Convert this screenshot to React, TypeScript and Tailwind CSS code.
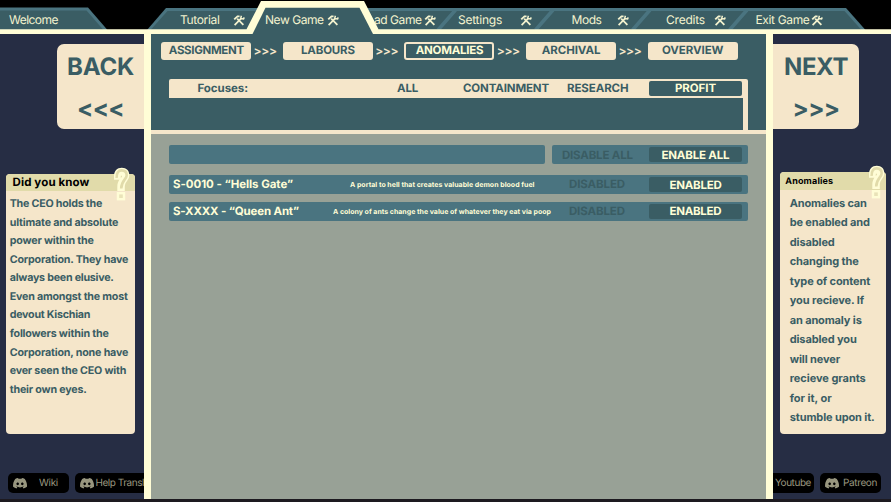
import React from "react";

const STEPS = ["ASSIGNMENT", "LABOURS", "ANOMALIES", "ARCHIVAL", "OVERVIEW"];

const FACTS: [string, number][] = [
  ["The CEO holds the", 92.5],
  ["ultimate and absolute", 108.5],
  ["power within the", 84],
  ["Corporation. They have", 118.5],
  ["always been elusive.", 104],
  ["Even amongst the most", 118],
  ["devout Kischian", 80.5],
  ["followers within the", 99],
  ["Corporation, none have", 118.5],
  ["ever seen the CEO with", 116.5],
  ["their own eyes.", 77],
];

const HELP: [string, number][] = [
  ["Anomalies can", 77],
  ["be enabled and", 80],
  ["disabled", 45],
  ["changing the", 69],
  ["type of content", 80.5],
  ["you recieve. If", 74.5],
  ["an anomaly is", 72],
  ["disabled you", 67],
  ["will never", 50.5],
  ["recieve grants", 76],
  ["for it, or", 42],
  ["stumble upon it.", 85],
];

/** Text tracked so that it fills exactly `w` pixels. */
function T({ w, children }: { w: number; children: string }) {
  const ref = React.useRef<HTMLSpanElement>(null);
  const [spacing, setSpacing] = React.useState(0);
  React.useLayoutEffect(() => {
    if (ref.current) {
      const natural = ref.current.getBoundingClientRect().width;
      setSpacing((w - natural) / children.length);
    }
  }, []);
  return (
    <span ref={ref} className="inline-block whitespace-pre" style={{ letterSpacing: spacing }}>
      {children}
    </span>
  );
}

function Tools() {
  return (
    <svg viewBox="0 0 12 12" className="h-[11px] w-[12px] shrink-0" fill="none" stroke="#f4f3cf">
      <path d="M4 4 10.800 10.800" strokeWidth="1.900" />
      <path d="M.8 4.800 4.400 1.500 6.600 1.500" strokeWidth="2.100" />
      <path d="M1.200 11 8.400 3.800" strokeWidth="1.900" />
      <path d="M8.600 .8 7.800 3.900 11 4.400 11.700 2.600" strokeWidth="1.600" />
    </svg>
  );
}

function Discord() {
  return (
    <svg viewBox="0 0 24 19" className="h-[11px] w-[14px] shrink-0" fill="#98967f">
      <path
        fillRule="evenodd"
        d="M20.3 1.6A19.8 19.8 0 0 0 15.4 0l-.7 1.3a18.300 18.300 0 0 0-5.400 0L8.600 0a19.700 19.700 0 0 0-4.900 1.600C.5 6.200-.3 10.700.1 15.200a19.900 19.900 0 0 0 6 3l1.300-2.100-1.900-.9.500-.4a14.200 14.200 0 0 0 12.100 0l.5.4-1.900.9 1.300 2.100a19.800 19.800 0 0 0 6-3c.5-5.200-.8-9.700-3.700-13.600zM8 12.500c-1.200 0-2.200-1.100-2.200-2.400S6.800 7.700 8 7.700s2.200 1.100 2.200 2.400-1 2.400-2.200 2.400zm8 0c-1.200 0-2.200-1.100-2.200-2.400s1-2.400 2.200-2.400 2.200 1.100 2.200 2.400-1 2.400-2.200 2.400z"
      />
    </svg>
  );
}

function Question({ className }: { className: string }) {
  return (
    <svg viewBox="0 0 18 35" className={`absolute -top-[8px] h-[35px] w-[18px] ${className}`} fill="none">
      <path d="M2 13.800V10C2 5 5 1.700 9.800 1.700c4.700 0 7.500 3 7.500 7.300 0 5.600-4.500 6.500-4.500 12V25H5.300v-4C5.300 13.500 10 12.500 10 9.800H8.800v4Z" fill="#fffdd6" />
      <path d="M4.700 11.800C4.400 6.800 6.300 4.400 9.700 4.400c3.200 0 5 1.900 5 4.800 0 4.300-5.500 5.300-5.500 13.400" stroke="#e1dbaa" strokeWidth="2.600" />
      <path d="M4.800 26h8.400v8.400H4.800Z" fill="#fffdd6" />
      <path d="M7.200 28.400h3.600v3.600H7.200Z" fill="#e9e3b8" />
    </svg>
  );
}

function TabLabel({ w, children, className }: { w: number; children: string; className: string }) {
  return (
    <div className={`flex h-full shrink-0 items-center justify-between ${className}`}>
      <T w={w}>{children}</T>
      <Tools />
    </div>
  );
}

function TabBar() {
  return (
    <header className="relative h-[34px] shrink-0 bg-black">
      <svg viewBox="0 0 891 34" className="absolute inset-0 h-[34px] w-[891px]">
        <path d="M0 7.500H88L107.500 30H0Z" fill="#4a7480" />
        <path d="M0 10.500H86.500L103.500 30H0Z" fill="#3a5d64" />
        <path d="M147 30 166 8H846L865.500 30Z" fill="#4a7480" />
        <path d="M150.500 30 167.500 11H844.500L861.500 30Z" fill="#3a5d64" />
        <path d="M438 30 455.500 10M535.500 30 553 10M632.500 30 650 10M729.500 30 747 10" stroke="#4a7480" strokeWidth="3.500" />
        <path d="M0 29.300H246.500L261 1H364L378.500 29.300H891V34.500H0Z" fill="#fffdd6" />
        <path d="M252 35 265.500 7.700H359.500L373.500 35Z" fill="#3a5d64" />
      </svg>
      <nav className="relative flex h-full items-center pt-[6px] text-[12px] text-[#f4f3cf]">
        <div className="w-[180px] pl-[9px]"><T w={49}>Welcome</T></div>
        <TabLabel w={39.5} className="w-[65px]">Tutorial</TabLabel>
        <TabLabel w={58.5} className="ml-[20px] w-[74px]">New Game</TabLabel>
        <TabLabel w={47.5} className="ml-[35px] w-[62px]">ad Game</TabLabel>
        <TabLabel w={44} className="ml-[22px] w-[74px]">Settings</TabLabel>
        <TabLabel w={30} className="ml-[39.500px] w-[57px]">Mods</TabLabel>
        <TabLabel w={39} className="ml-[37.500px] w-[60px]">Credits</TabLabel>
        <TabLabel w={54} className="ml-[29.500px] w-[67.500px]">Exit Game</TabLabel>
      </nav>
    </header>
  );
}

function LinkButton({ label, w, className }: { label: string; w: number; className: string }) {
  return (
    <div className={`flex h-[20px] shrink-0 items-center bg-black text-[10px] text-[#98967f] ${className}`}>
      <Discord />
      <T w={w}>{label}</T>
    </div>
  );
}

function Row({ name, nameW, text, textW, pad }: { name: string; nameW: number; text: string; textW: number; pad: string }) {
  return (
    <div className="flex h-[19px] items-center rounded-[2px] bg-[#4a7480] font-bold text-[#fffdd6]">
      <div className={`shrink-0 pl-[4px] text-[11.500px] leading-none ${pad}`}><T w={nameW}>{name}</T></div>
      <div className="w-[219px] shrink-0 text-[7px] leading-none"><T w={textW}>{text}</T></div>
      <div className="flex flex-1 items-center justify-end pr-[6.500px] text-[11.500px]">
        <div className="mr-[24px] leading-none text-[#3a5d64]"><T w={56}>DISABLED</T></div>
        <div className="flex h-[15px] w-[93px] items-center justify-center rounded-[2px] bg-[#3a5d64] pt-px leading-none"><T w={52}>ENABLED</T></div>
      </div>
    </div>
  );
}

export default function App() {
  return (
    <div className="flex h-[502px] w-[891px] flex-col overflow-hidden bg-[#262d44] font-['Inter',sans-serif] [text-rendering:geometricPrecision]">
      <TabBar />
      <div className="flex h-[465px] shrink-0">
        <aside className="flex w-[144px] shrink-0 flex-col">
          <div className="mt-[9.500px] ml-[57px] flex h-[85px] w-[87px] flex-col items-center rounded-l-[7px] bg-[#f5e6ca] text-[24px] font-bold text-[#3a5d64]">
            <div className="mt-[11px] h-[41px] leading-[24px]"><T w={67}>BACK</T></div>
            <div className="leading-[26px]"><T w={47}>{"<<<"}</T></div>
          </div>
          <div className="relative mt-[45px] ml-[6px] h-[260.500px] w-[128.500px] rounded-[4px] bg-[#f5e6ca]">
            <div className="flex h-[17.500px] items-center rounded-t-[4px] bg-[#e1dbaa] pl-[6.500px] text-[11.500px] font-bold text-black"><T w={77}>Did you know</T></div>
            <Question className="right-[4.500px]" />
            <div className="pt-[4px] pl-[3.700px] text-[10.700px] leading-[18.570px] font-bold text-[#3a5d64]">
              {FACTS.map(([line, w]) => <div key={line}><T w={w}>{line}</T></div>)}
            </div>
          </div>
          <div className="mt-auto mb-[6px] ml-[8px] flex">
            <LinkButton label="Wiki" w={19} className="w-[61px] justify-between rounded-[5px] pr-[11px] pl-[5px]" />
            <LinkButton label="Help Transl" w={48.5} className="ml-[6px] w-[69px] gap-[1.500px] rounded-l-[5px] pl-[5px]" />
          </div>
        </aside>

        <main className="flex w-[629px] shrink-0 flex-col border-x-[7px] border-[#fffdd6] bg-[#98a196]">
          <section className="flex h-[100px] shrink-0 flex-col border-b-4 border-[#f5e6ca] bg-[#3a5d64]">
            <div className="flex pt-[8px] pl-[10.300px]">
              {STEPS.map((step, i) => (
                <React.Fragment key={step}>
                  <div
                    className={
                      step === "ANOMALIES"
                        ? "flex h-[18px] w-[90px] shrink-0 items-center justify-center rounded-[3px] border-2 border-[#f5e6ca] text-[11.500px] leading-none font-bold text-[#fffdd6]"
                        : "flex h-[18px] w-[90px] shrink-0 items-center justify-center rounded-[3px] bg-[#f5e6ca] text-[11.500px] leading-none font-bold text-[#3a5d64]"
                    }
                  >
                    <T w={[75, 54, 67.5, 58.5, 61.5][i]}>{step}</T>
                  </div>
                  {i < 4 && <div className="flex h-[18px] w-[31.600px] shrink-0 items-center pl-[2.300px] text-[12px] leading-[18px] font-semibold text-[#f5e6ca]"><T w={23}>{">>>"}</T></div>}
                </React.Fragment>
              ))}
            </div>
            <div className="mt-[19px] ml-[18px] flex h-[51px] w-[579.400px] shrink-0 flex-col rounded-tr-[2px] border-r-[5px] border-[#f5e6ca]">
              <div className="-mr-[2px] flex h-[19px] shrink-0 items-center rounded-tl-[2px] bg-[#f5e6ca] text-[11.500px] leading-none font-bold text-[#3a5d64]">
                <div className="w-[228px] shrink-0 pl-[28.500px]"><T w={50.5}>Focuses:</T></div>
                <div className="w-[66px] shrink-0"><T w={21}>ALL</T></div>
                <div className="w-[104px] shrink-0"><T w={86}>CONTAINMENT</T></div>
                <div className="w-[82px] shrink-0"><T w={61.5}>RESEARCH</T></div>
                <div className="flex h-[15px] w-[93px] shrink-0 items-center justify-center rounded-[2px] bg-[#3a5d64] text-[#fffdd6]"><T w={41}>PROFIT</T></div>
              </div>
            </div>
          </section>
          <section className="mt-[11.400px] ml-[18px] flex w-[579.400px] flex-col">
            <div className="flex h-[19px] justify-between">
              <div className="w-[376px] rounded-[2px] bg-[#4a7480]" />
              <div className="flex w-[196px] items-center justify-between rounded-[2px] bg-[#4a7480] pr-[6.500px] pl-[9.500px] text-[11.500px] leading-none font-bold">
                <div className="pt-px text-[#3a5d64]"><T w={71}>DISABLE ALL</T></div>
                <div className="flex h-[15px] w-[93px] items-center justify-center rounded-[2px] bg-[#3a5d64] pt-px text-[#fffdd6]"><T w={68}>ENABLE ALL</T></div>
              </div>
            </div>
            <div className="mt-[11px] flex flex-col gap-[7.700px]">
              <Row name={"S-0010 - “Hells Gate”"} nameW={120} text="A portal to hell that creates valuable demon blood fuel" textW={184.5} pad="w-[181px]" />
              <Row name={"S-XXXX - “Queen Ant”"} nameW={126} text="A colony of ants change the value of whatever they eat via poop" textW={218} pad="w-[164px]" />
            </div>
          </section>
        </main>

        <aside className="flex w-[118px] shrink-0 flex-col">
          <div className="mt-[9.500px] flex h-[85px] w-[86px] flex-col items-center rounded-r-[7px] bg-[#f5e6ca] text-[24px] font-bold text-[#3a5d64]">
            <div className="mt-[11px] h-[41px] leading-[24px]"><T w={64}>NEXT</T></div>
            <div className="leading-[26px]"><T w={47}>{">>>"}</T></div>
          </div>
          <div className="relative mt-[43.500px] ml-[7px] h-[262px] w-[106.400px] rounded-[4px] bg-[#f5e6ca]">
            <div className="flex h-[18px] items-center rounded-t-[4px] bg-[#e1dbaa] pt-px pl-[5.300px] text-[9px] font-bold text-black"><T w={48}>Anomalies</T></div>
            <Question className="right-[1.500px]" />
            <div className="pt-[3.700px] pl-[9.700px] text-[11px] leading-[19.500px] font-bold text-[#3a5d64]">
              {HELP.map(([line, w]) => <div key={line}><T w={w}>{line}</T></div>)}
            </div>
          </div>
          <div className="mt-auto mb-[6px] flex">
            <div className="flex h-[20px] w-[41px] shrink-0 items-center rounded-r-[5px] bg-black pl-[2px] text-[10px] text-[#98967f]"><T w={36}>Youtube</T></div>
            <LinkButton label="Patreon" w={34} className="ml-[6px] w-[61px] gap-[4px] rounded-[5px] pl-[5px]" />
          </div>
        </aside>
      </div>
      <footer className="h-[3px] shrink-0 bg-[#1d1a20]" />
    </div>
  );
}
